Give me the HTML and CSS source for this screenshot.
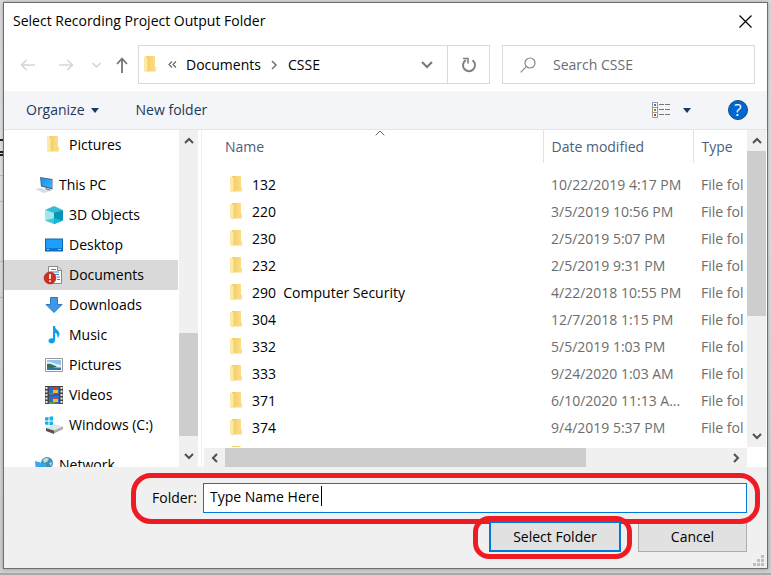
FILE: index.html
```html
<!DOCTYPE html>
<html lang="en">
<head>
<meta charset="utf-8">
<title>Select Recording Project Output Folder</title>
<link rel="stylesheet" href="styles.css">
</head>
<body>
<svg class="defs" aria-hidden="true">
  <defs>
    <linearGradient id="gold" x1="0" x2="1"><stop offset="0" stop-color="#f2cb66"/><stop offset="1" stop-color="#fde08a"/></linearGradient>
    <linearGradient id="sky" x1="0" y1="0" x2="1" y2="1"><stop offset="0" stop-color="#1b8ff0"/><stop offset="1" stop-color="#35b5ff"/></linearGradient>
    <symbol id="folder" viewBox="0 0 12 17">
      <path d="M2 0h9v11h1v4.500H3z" fill="url(#gold)"/>
      <path d="M0 0l3.500 2v12.500L2.500 17 0 15z" fill="#fde9a6"/>
    </symbol>
    <symbol id="up" viewBox="0 0 10 7"><path d="M1 6l4-4 4 4" fill="none" stroke="#505050" stroke-width="2"/></symbol>
    <symbol id="down" viewBox="0 0 10 7"><path d="M1 1l4 4 4-4" fill="none" stroke="#505050" stroke-width="2"/></symbol>
    <symbol id="left" viewBox="0 0 7 10"><path d="M6 1L2 5l4 4" fill="none" stroke="#505050" stroke-width="2"/></symbol>
    <symbol id="right" viewBox="0 0 7 10"><path d="M1 1l4 4-4 4" fill="none" stroke="#505050" stroke-width="2"/></symbol>
  </defs>
</svg>
<main class="dialog">
  <header class="titlebar">
    <h1>Select Recording Project Output Folder</h1>
    <button class="close" aria-label="Close"><svg width="13" height="13" viewBox="0 0 13 13"><path d="M.5 .5l12 12M12.500 .5l-12 12" stroke="#000" stroke-width="1.200"/></svg></button>
  </header>

  <div class="navbar">
    <div class="history">
      <button aria-label="Back"><svg width="16" height="12" viewBox="0 0 16 12"><path d="M15 6H2M6.500 1L1.500 6l5 5" fill="none" stroke="#d6d6d6" stroke-width="1.600"/></svg></button>
      <button aria-label="Forward"><svg width="16" height="12" viewBox="0 0 16 12"><path d="M1 6h13M9.500 1l5 5-5 5" fill="none" stroke="#d6d6d6" stroke-width="1.600"/></svg></button>
      <button class="recent" aria-label="Recent locations"><svg width="9" height="6" viewBox="0 0 9 6"><path d="M.5 1l4 4 4-4" fill="none" stroke="#d6d6d6" stroke-width="1.600"/></svg></button>
      <button class="parent" aria-label="Up"><svg width="12" height="16" viewBox="0 0 12 16"><path d="M6 16V2M1 7l5-5.500L11 7" fill="none" stroke="#757575" stroke-width="1.800"/></svg></button>
    </div>
    <div class="address">
      <svg class="folder" width="12" height="17"><use href="#folder"/></svg>
      <svg class="guillemet" width="9" height="7" viewBox="0 0 9 7"><path d="M4 .5l-3 3 3 3M8 .5l-3 3 3 3" fill="none" stroke="#666" stroke-width="1.200"/></svg>
      <a href="#">Documents</a>
      <svg class="crumb" width="7" height="10" viewBox="0 0 7 10"><path d="M1 1l4 4-4 4" fill="none" stroke="#777" stroke-width="1.600"/></svg>
      <a href="#">CSSE</a>
      <button class="drop" aria-label="Previous locations"><svg width="12" height="8" viewBox="0 0 12 8"><path d="M1 1l5 5 5-5" fill="none" stroke="#777" stroke-width="2"/></svg></button>
      <button class="refresh" aria-label="Refresh"><svg width="16" height="16" viewBox="0 0 16 16"><path d="M11.500 3.300A6 6 0 1 1 4.800 3.100" fill="none" stroke="#808080" stroke-width="2"/><path d="M2 1.500h5v5" fill="none" stroke="#808080" stroke-width="1.600"/></svg></button>
    </div>
    <div class="search">
      <svg width="16" height="16" viewBox="0 0 16 16"><circle cx="10" cy="6" r="5" fill="none" stroke="#888" stroke-width="1.200"/><path d="M6.300 9.700L.7 15.300" stroke="#888" stroke-width="1.200"/></svg>
      <input type="search" placeholder="Search CSSE" aria-label="Search CSSE">
    </div>
  </div>

  <div class="toolbar">
    <button>Organize <svg width="8" height="5" viewBox="0 0 8 5"><path d="M0 0h8L4 5z" fill="#1e395b"/></svg></button>
    <button>New folder</button>
    <span class="spacer"></span>
    <button class="view" aria-label="Change your view">
      <svg width="18" height="16" viewBox="0 0 18 16"><path d="M.5 .5h5v15h-5zM.5 5.500h5M.5 10.500h5" fill="#fff" stroke="#999"/><path d="M2 2h2v2H2z" fill="#3a7ec0"/><path d="M2 7h2v2H2z" fill="#7d8a2a"/><path d="M2 12h2v2H2z" fill="#c0391b"/><path d="M7 2.500h5m1 0h5M7 7.500h5m1 0h5M7 12.500h5m1 0h5" stroke="#777"/></svg>
    </button>
    <button class="more" aria-label="More options"><svg width="8" height="5" viewBox="0 0 8 5"><path d="M0 0h8L4 5z" fill="#1e395b"/></svg></button>
    <button class="help" aria-label="Help">?</button>
  </div>

  <div class="panes">
    <nav class="tree" aria-label="Folders">
      <a class="child" href="#"><svg class="ico" viewBox="0 0 18 18"><use href="#folder" x="2" width="12" height="17"/></svg>Pictures</a>
      <a class="root" href="#"><svg class="ico" viewBox="0 0 18 18"><path d="M5 1l12.500 2v10.500L6 10.500z" fill="#4a6880"/><path d="M6 2l11 2v8L7 9.500z" fill="url(#sky)"/><path d="M10 11.800l5 1.200 1 2-5-1z" fill="#8898a5"/><path d="M0 13l6-1 8 3.500-5 1.500z" fill="#d3dce3"/></svg>This PC</a>
      <a class="child" href="#"><svg class="ico" viewBox="0 0 18 18"><path d="M0 4l9-4 9 4-9 4z" fill="#35bcd0"/><path d="M0 4l9 3v11l-9-3.500z" fill="#9fe9ee"/><path d="M18 4L9 7v11l9-3.500z" fill="#0893b4"/><path d="M0 14.500L9 12v6z" fill="#4cc5d2"/><path d="M18 14.500L9 12v6z" fill="#08bade"/></svg>3D Objects</a>
      <a class="child" href="#"><svg class="ico" viewBox="0 0 18 18"><path d="M0 2.500h18v13H0z" fill="#0b66b5"/><path d="M1 3.500h16v9H1z" fill="#1d9ffb"/><path d="M1 12.500h16v2H1z" fill="#0874ce"/><path d="M2 13.500h2M13 13.500h3" stroke="#8fd0ff"/></svg>Desktop</a>
      <a class="child selected" href="#"><svg class="ico" viewBox="0 0 18 18"><path d="M3.500 .5h9.500l3.500 3.500v13.500h-13z" fill="#fff" stroke="#888"/><path d="M12.500 .5v4h4" fill="#ddd" stroke="#888"/><path d="M6 3.500h5M5 6h9M8 8.500h6M12 11h3M12 13.500h3" stroke="#3a86c9"/><circle cx="5" cy="12" r="6" fill="#cf2f23" stroke="#a8281e" stroke-width=".6"/><path d="M5 8v5M5 14.200v1.800" stroke="#fff" stroke-width="1.600"/></svg>Documents</a>
      <a class="child" href="#"><svg class="ico" viewBox="0 0 18 18"><path d="M5.500 1.500h7v7h4.500L9 16.500 1 8.500h4.500z" fill="#3d96e6" stroke="#2b78c0"/></svg>Downloads</a>
      <a class="child" href="#"><svg class="ico" viewBox="0 0 18 18"><path d="M8 0h2c0 4 4.500 4 4.500 8 0 2-1 3-2 4 .5-3-.5-4.500-2.500-5v7c0 5-6.500 4-6.500 1 0-2.500 3-3 4.500-2.500z" fill="#0a9df0"/></svg>Music</a>
      <a class="child" href="#"><svg class="ico" viewBox="0 0 18 18"><path d="M.5 2.500h17v13H.5z" fill="#fff" stroke="#999"/><path d="M2 4h14v10H2z" fill="#8cc4ef"/><path d="M2 6c4-1 6 2 14 3v3H2z" fill="#e2f1fb"/><path d="M2 8c4-1 7 2 10 2.500L8 12H2z" fill="#356d5f"/><path d="M2 11.500h14V14H2z" fill="#2f75a8"/></svg>Pictures</a>
      <a class="child" href="#"><svg class="ico" viewBox="0 0 18 18"><path d="M0 0h18v18H0z" fill="#444"/><path d="M4 1h10v7.500H4zM4 9.500h10V18H4z" fill="#2b6cd4"/><path d="M1.500 1v17M16.500 1v17" stroke="#e8e8e8" stroke-width="2" stroke-dasharray="2 1.500"/><path d="M9 2h3v2H9zM9 11h3v2H9z" fill="#e23a2c"/><path d="M8 4h5v3H8zM8 13h5v3H8z" fill="#f2bd2c"/><path d="M4 7h5v1.500H4zM4 16h6v2H4z" fill="#5c9a38"/></svg>Videos</a>
      <a class="child" href="#"><svg class="ico" viewBox="0 0 18 18"><path d="M0 1.500l3.500-.5v3.500H0zM4.500 .8L8 .3v4.200H4.500zM0 5.500h3.500V9L0 8.500zM4.500 5.500H8v4l-3.500-.4z" fill="#10b4e8"/><path d="M1 12l8-4 9 2.500-9 4z" fill="#e2e4e6"/><path d="M1 12l8 2.500V18l-8-3z" fill="#555"/><path d="M9 14.500l9-4V13l-9 4.500z" fill="#a5a9ac"/></svg>Windows (C:)</a>
      <a class="root" href="#"><svg class="ico" viewBox="0 0 18 18"><circle cx="12" cy="7" r="6" fill="#3f8fb9"/><path d="M8 4c2-3 5-2 6-1l-2 3-3 1zM14 7l3-1-1 4z" fill="#b5e0da"/><path d="M0 5l11 3v9L1 15z" fill="#37a9ea"/></svg>Network</a>
    </nav>
    <div class="bar vertical tree-bar">
      <button aria-label="Scroll up"><svg width="10" height="7"><use href="#up"/></svg></button>
      <span class="track-before"></span><span class="thumb"></span><span class="track-after"></span>
      <button aria-label="Scroll down"><svg width="10" height="7"><use href="#down"/></svg></button>
    </div>
    <section class="files">
      <div class="list">
        <table>
          <colgroup><col><col class="col-date"><col class="col-type"></colgroup>
          <thead><tr>
            <th>Name<svg class="sort" width="10" height="6" viewBox="0 0 10 6"><path d="M.7 5.300L5 1l4.300 4.300" fill="none" stroke="#666"/></svg></th>
            <th>Date modified</th><th>Type</th>
          </tr></thead>
          <tbody>
            <tr><td><svg class="folder" width="12" height="17"><use href="#folder"/></svg>132</td><td>10/22/2019 4:17 PM</td><td>File fol</td></tr>
            <tr><td><svg class="folder" width="12" height="17"><use href="#folder"/></svg>220</td><td>3/5/2019 10:56 PM</td><td>File fol</td></tr>
            <tr><td><svg class="folder" width="12" height="17"><use href="#folder"/></svg>230</td><td>2/5/2019 5:07 PM</td><td>File fol</td></tr>
            <tr><td><svg class="folder" width="12" height="17"><use href="#folder"/></svg>232</td><td>2/5/2019 9:31 PM</td><td>File fol</td></tr>
            <tr><td><svg class="folder" width="12" height="17"><use href="#folder"/></svg>290&nbsp; Computer Security</td><td>4/22/2018 10:55 PM</td><td>File fol</td></tr>
            <tr><td><svg class="folder" width="12" height="17"><use href="#folder"/></svg>304</td><td>12/7/2018 1:15 PM</td><td>File fol</td></tr>
            <tr><td><svg class="folder" width="12" height="17"><use href="#folder"/></svg>332</td><td>5/5/2019 1:03 PM</td><td>File fol</td></tr>
            <tr><td><svg class="folder" width="12" height="17"><use href="#folder"/></svg>333</td><td>9/24/2020 1:03 AM</td><td>File fol</td></tr>
            <tr><td><svg class="folder" width="12" height="17"><use href="#folder"/></svg>371</td><td>6/10/2020 11:13 A...</td><td>File fol</td></tr>
            <tr><td><svg class="folder" width="12" height="17"><use href="#folder"/></svg>374</td><td>9/4/2019 5:37 PM</td><td>File fol</td></tr>
            <tr><td><svg class="folder" width="12" height="17"><use href="#folder"/></svg></td><td></td><td></td></tr>
          </tbody>
        </table>
      </div>
      <div class="bar vertical list-bar">
        <button aria-label="Scroll up"><svg width="10" height="7"><use href="#up"/></svg></button>
        <span class="thumb"></span><span class="track-after"></span>
        <button aria-label="Scroll down"><svg width="10" height="7"><use href="#down"/></svg></button>
      </div>
      <div class="bar horizontal">
        <button aria-label="Scroll left"><svg width="7" height="10"><use href="#left"/></svg></button>
        <span class="thumb"></span><span class="track-after"></span>
        <button aria-label="Scroll right"><svg width="7" height="10"><use href="#right"/></svg></button>
      </div>
    </section>
  </div>

  <footer class="footer">
    <div class="field">
      <label for="folder-name">Folder:</label>
      <div class="entry"><input id="folder-name" type="text" value="Type Name Here"><span class="caret"></span></div>
    </div>
    <div class="actions">
      <span class="marked"><button class="primary">Select Folder</button></span>
      <button class="cancel">Cancel</button>
    </div>
    <svg class="grip" width="11" height="11" viewBox="0 0 11 11"><path d="M8 0h3v3H8zM4 4h3v3H4zM8 4h3v3H8zM0 8h3v3H0zM4 8h3v3H4zM8 8h3v3H8z" fill="#bfbfbf"/></svg>
  </footer>
</main>
</body>
</html>
```
FILE: styles.css
```css
* { box-sizing: border-box; }

body {
  margin: 0;
  height: 100vh;
  padding: 2px 3px 6px;
  overflow: hidden;
  /* Dark and light rules of the document behind the dialog, then its grey. */
  background:
    linear-gradient(#222 2px, transparent 2px 12px, #222 12px 14px, transparent 14px 15px, #222 15px 17px, transparent 17px) 0 139px / 4px 17px no-repeat,
    linear-gradient(#c0c0c0 1px, transparent 1px) 0 175px / 4px 26px no-repeat,
    linear-gradient(#c0c0c0 1px, transparent 1px) 0 201px / 4px 60px no-repeat,
    linear-gradient(#c0c0c0 1px, transparent 1px) 0 261px / 4px 36px no-repeat,
    linear-gradient(#c0c0c0 1px, transparent 1px) 0 297px / 4px 60px no-repeat,
    linear-gradient(#a8a8a8, #a8a8a8) 0 100% / 100% 2px no-repeat,
    linear-gradient(#dcdcdc, #e4e4e4 30%, #d0d0d0);
  font: 14px/20px "Open Sans", "Noto Sans", sans-serif;
  color: #000;
}

button, input { font: inherit; color: inherit; }
button { border: 0; padding: 0; background: none; }
a { color: inherit; text-decoration: none; }
svg { display: block; flex: none; }
.defs { position: absolute; width: 0; height: 0; }

.dialog {
  display: flex;
  flex-direction: column;
  height: 100%;
  border: 1px solid #6e6e6e;
  background: #fff;
  box-shadow: 0 0 4px rgba(0, 0, 0, 0.3);
}

.titlebar {
  display: flex;
  align-items: center;
  justify-content: space-between;
  height: 36px;
  padding: 0 15px 0 9px;
}
.titlebar h1 { margin: 0; font-size: 14px; font-weight: 400; }

.navbar {
  display: flex;
  padding: 6px 12px 7px 16px;
}
.history { display: flex; align-items: center; width: 118px; }
.history button + button { margin-left: 22px; }
.history button.recent { margin-left: 18px; }
.history button.parent { margin-left: 15px; }
.address {
  display: flex;
  align-items: center;
  flex: 352 1 352px;
  height: 39px;
  padding-left: 5px;
  border: 1px solid #d9d9d9;
}
.guillemet { margin: 0 9px 0 12px; }
.crumb { margin: 0 10px; }
.drop { margin-left: auto; padding: 0 14px; }
.refresh {
  display: grid;
  place-items: center;
  align-self: stretch;
  width: 42px;
  border-left: 1px solid #d9d9d9;
}
.search {
  display: flex;
  align-items: center;
  flex: 253 1 253px;
  gap: 17px;
  margin-left: 12px;
  padding-left: 17px;
  border: 1px solid #d9d9d9;
}
.search input {
  flex: 1;
  min-width: 0;
  padding: 0;
  border: 0;
  outline: 0;
  background: none;
}
.search input::placeholder { color: #6d6d6d; opacity: 1; }

.toolbar {
  display: flex;
  align-items: center;
  height: 39px;
  padding: 0 19px 0 22px;
  border-bottom: 1px solid #e3e5e8;
  background: #f4f5f8;
  color: #1e395b;
}
.toolbar button { display: flex; align-items: center; gap: 6px; }
.toolbar button + button { margin-left: 37px; }
.toolbar .spacer { flex: 1; }
.toolbar button.more { margin-left: 13px; }
.toolbar .help {
  justify-content: center;
  width: 20px;
  height: 20px;
  border: 1px solid #174f86;
  border-radius: 50%;
  background: #0067cf;
  color: #fff;
  font-size: 17px;
}

.panes { display: flex; flex: 1; min-height: 0; }

.tree { flex: none; width: 174px; overflow: hidden; }
.tree a { display: flex; align-items: center; gap: 6px; height: 30px; }
.tree .child { padding-left: 41px; }
.tree .root { gap: 6px; margin-top: 10px; padding-left: 31px; }
.tree .selected { background: #d9d9d9; }
.ico { width: 18px; height: 18px; overflow: visible; }

.bar { display: flex; background: #f0f0f0; }
.bar button { display: grid; place-items: center; flex: none; }
.bar .thumb { background: #cdcdcd; }
.vertical { flex-direction: column; width: 19px; }
.vertical button { height: 21px; }
.horizontal { height: 19px; }
.horizontal button { width: 21px; }
.tree-bar { flex: none; margin-left: 1px; }
.tree-bar .track-before { flex: 182; }
.tree-bar .thumb { flex: 103; }
.tree-bar .track-after { flex: 10; }
.list-bar .thumb { flex: 164; }
.list-bar .track-after { flex: 110; }
.horizontal .thumb { flex: 360; }
.horizontal .track-after { flex: 140; }

.files {
  display: grid;
  grid-template: minmax(0, 1fr) 20px / minmax(0, 1fr) 20px;
  flex: 1;
  min-width: 0;
  margin-left: 3px;
  border-left: 1px solid #f0f0f0;
  padding-left: 2px;
}
.horizontal { margin-top: 1px; }
.list { overflow: hidden; }
table { width: 100%; table-layout: fixed; border-collapse: collapse; }
.col-date { width: 150px; }
.col-type { width: 54px; }
th {
  position: relative;
  height: 33px;
  padding: 0 0 0 8px;
  border-left: 1px solid #e2e2e2;
  color: #4c607a;
  font-weight: 400;
  text-align: left;
}
th:first-child { padding-left: 21px; border-left: 0; }
.sort { position: absolute; top: 0; left: calc(50% + 2px); }
tbody::before { content: ""; display: block; height: 8px; }
td {
  height: 27px;
  padding: 0 0 0 8px;
  overflow: hidden;
  color: #6d6d6d;
  white-space: nowrap;
}
td:first-child { padding-left: 26px; color: #000; }
td .folder { display: inline-block; margin-right: 10px; vertical-align: -3px; }

.footer {
  position: relative;
  padding: 16px 20px 16px 148px;
  background: #f0f0f0;
}
.field { position: relative; display: flex; align-items: center; gap: 5px; }
.field::after, .marked::after {
  content: "";
  position: absolute;
  border: 5px solid #ed1c24;
  border-radius: 20px;
  pointer-events: none;
}
.field::after { inset: -10px -13px -11px -21px; z-index: 1; }
.field label { flex: none; width: 46px; }
.entry { position: relative; flex: 1; }
.entry input {
  display: block;
  width: 100%;
  height: 30px;
  padding: 0 6px 3px;
  border: 1px solid #0078d7;
  outline: 0;
  background: #fff;
}
.caret { position: absolute; top: 3px; left: 118px; width: 1px; height: 20px; background: #000; }
.actions { display: flex; justify-content: flex-end; gap: 17px; margin-top: 8px; }
.marked { position: relative; z-index: 2; }
.marked::after { inset: -5px -11px -7px -16px; border-radius: 16px; }
.actions button { display: block; height: 31px; border: 1px solid #adadad; background: #e1e1e1; }
.actions .primary { width: 132px; border: 2px solid #0078d7; }
.actions .cancel { width: 109px; }
.grip { position: absolute; right: 3px; bottom: 2px; }
```
